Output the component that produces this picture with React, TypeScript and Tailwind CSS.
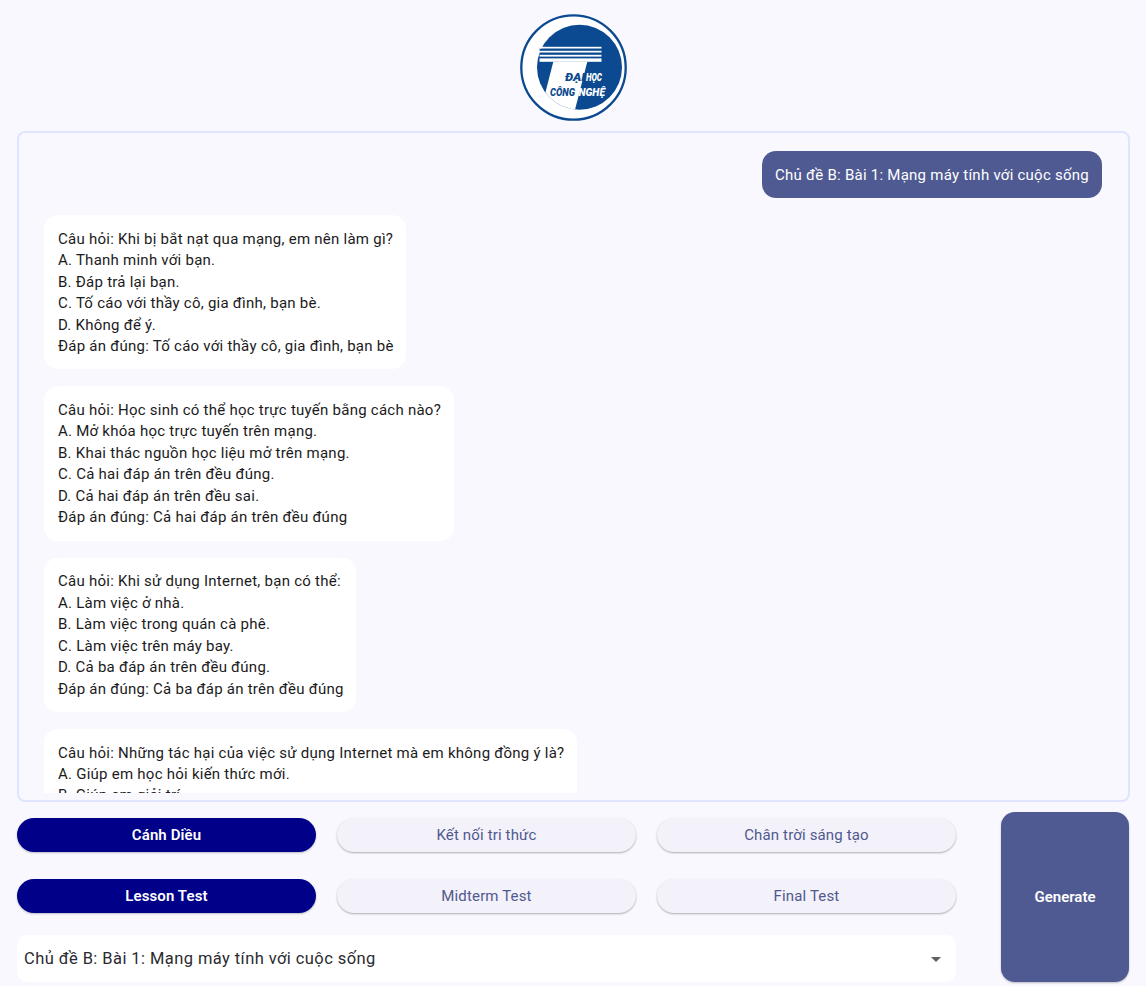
import React from "react";

const font = { fontFamily: "Roboto, sans-serif" };

const questions = [
  ["Câu hỏi: Khi bị bắt nạt qua mạng, em nên làm gì?", "A. Thanh minh với bạn.", "B. Đáp trả lại bạn.", "C. Tố cáo với thầy cô, gia đình, bạn bè.", "D. Không để ý.", "Đáp án đúng: Tố cáo với thầy cô, gia đình, bạn bè"],
  ["Câu hỏi: Học sinh có thể học trực tuyến bằng cách nào?", "A. Mở khóa học trực tuyến trên mạng.", "B. Khai thác nguồn học liệu mở trên mạng.", "C. Cả hai đáp án trên đều đúng.", "D. Cả hai đáp án trên đều sai.", "Đáp án đúng: Cả hai đáp án trên đều đúng"],
  ["Câu hỏi: Khi sử dụng Internet, bạn có thể:", "A. Làm việc ở nhà.", "B. Làm việc trong quán cà phê.", "C. Làm việc trên máy bay.", "D. Cả ba đáp án trên đều đúng.", "Đáp án đúng: Cả ba đáp án trên đều đúng"],
  ["Câu hỏi: Những tác hại của việc sử dụng Internet mà em không đồng ý là?", "A. Giúp em học hỏi kiến thức mới.", "B. Giúp em giải trí."],
];

function LogoText({ x, y, w, fill, children }: { x: number; y: number; w: number; fill: string; children: string }) {
  return (
    <text x={x} y={y} textLength={w} lengthAdjust="spacingAndGlyphs" fontSize="11" fontWeight="900" fontStyle="italic" fill={fill} style={font}>
      {children}
    </text>
  );
}

function Logo() {
  const blue = "#0b4a90";
  return (
    <svg width="108" height="108" viewBox="0 0 108 108" className="ml-[1px]">
      <defs>
        <clipPath id="disc">
          <circle cx="59.5" cy="53.3" r="42.5" />
        </clipPath>
      </defs>
      <circle cx="53.5" cy="53.5" r="52.2" fill="#ffffff" stroke={blue} strokeWidth="2.3" />
      <g clipPath="url(#disc)">
        <rect x="0" y="0" width="108" height="108" fill={blue} />
        <polygon points="33.3,47.7 67.3,47.7 53.9,100 19.9,100" fill="#ffffff" />
      </g>
      <polygon points="19.5,34.5 30,34.5 30,47.7 21,47.7" fill={blue} />
      <g fill="#ffffff">
        <rect x="19.5" y="32.8" width="62" height="1.7" />
        <rect x="19.5" y="36.8" width="62" height="1.7" />
        <rect x="19.5" y="40.8" width="62" height="1.8" />
        <rect x="19.5" y="44.4" width="62" height="3.4" />
      </g>
      <LogoText x={45} y={66.5} w={20} fill={blue}>ĐẠI</LogoText>
      <LogoText x={66} y={66.5} w={16} fill="#ffffff">HỌC</LogoText>
      <LogoText x={30} y={82} w={25} fill={blue}>CÔNG</LogoText>
      <LogoText x={58.5} y={82} w={26.5} fill="#ffffff">NGHỆ</LogoText>
    </svg>
  );
}

function Pill({ label, active }: { label: string; active?: boolean }) {
  return active ? (
    <div className="flex h-[34px] w-[299px] items-center justify-center rounded-[17px] bg-[#000088] text-[15px] font-semibold tracking-[0.1px] text-white shadow-[0_1px_2px_rgba(0,0,0,0.25)]">
      {label}
    </div>
  ) : (
    <div className="flex h-[34px] w-[299px] items-center justify-center rounded-[17px] bg-[#f3f1f9] text-[15px] tracking-[0.15px] text-[#50598f] shadow-[0_1px_2px_rgba(0,0,0,0.3)]">
      {label}
    </div>
  );
}

export default function App() {
  return (
    <div className="flex h-[986px] w-[1146px] flex-col overflow-hidden bg-[#f9f8ff] px-[17px]" style={font}>
      <div className="flex justify-center pt-[14px] pb-[9px]">
        <Logo />
      </div>
      <div className="h-[671px] w-[1113px] shrink-0 rounded-[8px] border-2 border-[#e0e5ff] pt-[18px] pb-[7px]">
        <div className="h-full overflow-hidden pl-[25px] pr-[26px]">
          <div className="flex justify-end">
            <div className="flex h-[47px] items-center rounded-[14px] bg-[#505a92] px-[13px] pt-[2px] text-[15px] tracking-[0.25px] text-white">
              Chủ đề B: Bài 1: Mạng máy tính với cuộc sống
            </div>
          </div>
          <div className="mt-[17px] flex flex-col items-start gap-[17px]">
            {questions.map((q, i) => (
              <div key={i} className="rounded-[14px] bg-white pl-[14px] pr-[12.5px] pt-[13.7px] pb-[11.9px] text-[15px] leading-[21.45px] tracking-[0.25px] text-[#1b1b21]">
                {q.map((line, j) => (
                  <div key={j}>{line}</div>
                ))}
              </div>
            ))}
          </div>
        </div>
      </div>
      <div className="mt-[9.5px] flex items-stretch justify-between">
        <div className="flex w-[939px] flex-col">
          <div className="mt-[6.5px] flex justify-between">
            <Pill label="Cánh Diều" active />
            <Pill label="Kết nối tri thức" />
            <Pill label="Chân trời sáng tạo" />
          </div>
          <div className="mt-[27px] flex justify-between">
            <Pill label="Lesson Test" active />
            <Pill label="Midterm Test" />
            <Pill label="Final Test" />
          </div>
          <div className="mt-[22px] flex h-[47px] items-center justify-between rounded-[10px] bg-white pt-[1px] pr-[15px] pl-[7px] text-[16.5px] tracking-[0.42px] text-[#2a2a30]">
            <span>Chủ đề B: Bài 1: Mạng máy tính với cuộc sống</span>
            <span className="h-0 w-0 border-x-[5px] border-t-[5px] border-x-transparent border-t-[#5f5f66]" />
          </div>
        </div>
        <div className="flex h-[170.5px] w-[128px] items-center justify-center rounded-[14px] bg-[#505a92] text-[15px] font-semibold text-white shadow-[0_1px_2px_rgba(0,0,0,0.25)]">
          Generate
        </div>
      </div>
    </div>
  );
}
